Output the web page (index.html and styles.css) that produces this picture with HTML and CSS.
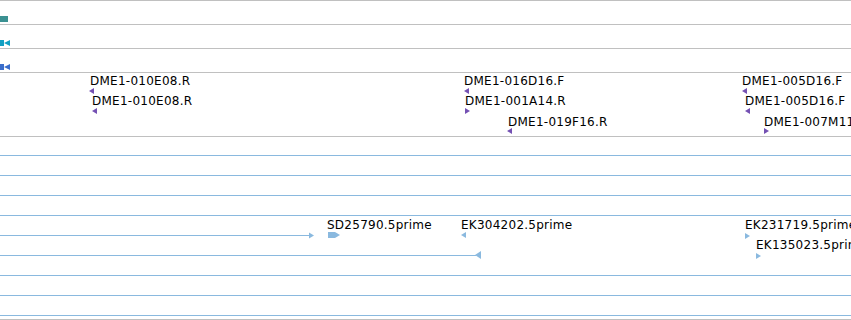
FILE: index.html
```html
<!DOCTYPE html>
<html lang="en">
<head>
    <meta charset="UTF-8">
    <title>Tracks</title>
    <link rel="stylesheet" href="styles.css">
</head>
<body>
    <div class="tracks">
        <!-- track 1 -->
        <div class="track small">
            <div class="feat box teal" style="left:0;top:15px;width:8px;"></div>
        </div>
        <!-- track 2 -->
        <div class="track small">
            <svg class="feat" style="left:0;top:15px" width="10" height="6"><rect x="0" y="0" width="4" height="6" fill="#12a0c3"/><polygon points="4,3 10,0 10,6" fill="#12a0c3"/></svg>
        </div>
        <!-- track 3 -->
        <div class="track small">
            <svg class="feat" style="left:0;top:15px" width="10" height="6"><rect x="0" y="0" width="4" height="6" fill="#3a6dcb"/><polygon points="4,3 10,0 10,6" fill="#3a6dcb"/></svg>
        </div>
        <!-- track 4: end reads -->
        <div class="track reads">
            <span class="label" style="left:90px;top:1px">DME1-010E08.R</span>
            <svg class="feat" style="left:89px;top:15px" width="5" height="6"><polygon points="0,3 5,0 5,6" class="purple"/></svg>
            <span class="label" style="left:92px;top:21px">DME1-010E08.R</span>
            <svg class="feat" style="left:92px;top:35px" width="5" height="6"><polygon points="0,3 5,0 5,6" class="purple"/></svg>

            <span class="label" style="left:464px;top:1px">DME1-016D16.F</span>
            <svg class="feat" style="left:464px;top:15px" width="5" height="6"><polygon points="0,3 5,0 5,6" class="purple"/></svg>
            <span class="label" style="left:465px;top:21px">DME1-001A14.R</span>
            <svg class="feat" style="left:465px;top:35px" width="5" height="6"><polygon points="5,3 0,0 0,6" class="purple"/></svg>
            <span class="label" style="left:508px;top:42px">DME1-019F16.R</span>
            <svg class="feat" style="left:507px;top:55px" width="5" height="6"><polygon points="0,3 5,0 5,6" class="purple"/></svg>

            <span class="label" style="left:742px;top:1px">DME1-005D16.F</span>
            <svg class="feat" style="left:742px;top:15px" width="5" height="6"><polygon points="0,3 5,0 5,6" class="purple"/></svg>
            <span class="label" style="left:745px;top:21px">DME1-005D16.F</span>
            <svg class="feat" style="left:745px;top:35px" width="5" height="6"><polygon points="0,3 5,0 5,6" class="purple"/></svg>
            <span class="label" style="left:764px;top:42px">DME1-007M11.F</span>
            <svg class="feat" style="left:764px;top:55px" width="5" height="6"><polygon points="5,3 0,0 0,6" class="purple"/></svg>
        </div>
        <!-- track 5: ESTs -->
        <div class="track ests">
            <div class="feat line" style="left:0;top:18px;width:100%"></div>
            <div class="feat line" style="left:0;top:38px;width:100%"></div>
            <div class="feat line" style="left:0;top:58px;width:100%"></div>
            <div class="feat line" style="left:0;top:78px;width:100%"></div>

            <div class="feat line" style="left:0;top:98px;width:309px"></div>
            <svg class="feat" style="left:309px;top:95px" width="5" height="7"><polygon points="5,3.5 0,0.5 0,6.5" class="lblue"/></svg>

            <span class="label" style="left:327px;top:81px">SD25790.5prime</span>
            <svg class="feat" style="left:328px;top:95px" width="12" height="6"><polygon points="0,0 7,0 12,3 7,6 0,6" class="lblue"/></svg>

            <span class="label" style="left:461px;top:81px">EK304202.5prime</span>
            <svg class="feat" style="left:461px;top:95px" width="5" height="6"><polygon points="0,3 5,0 5,6" class="lblue"/></svg>

            <div class="feat line" style="left:0;top:118px;width:476px"></div>
            <svg class="feat" style="left:475px;top:114px" width="6" height="8"><polygon points="0,4 6,0 6,8" class="lblue"/></svg>

            <span class="label" style="left:745px;top:81px">EK231719.5prime</span>
            <svg class="feat" style="left:745px;top:96px" width="5" height="6"><polygon points="5,3 0,0 0,6" class="lblue"/></svg>
            <span class="label" style="left:756px;top:101px">EK135023.5prime</span>
            <svg class="feat" style="left:756px;top:116px" width="5" height="6"><polygon points="5,3 0,0 0,6" class="lblue"/></svg>

            <div class="feat line" style="left:0;top:138px;width:100%"></div>
            <div class="feat line" style="left:0;top:158px;width:100%"></div>
            <div class="feat line" style="left:0;top:178px;width:100%"></div>
        </div>
    </div>
</body>
</html>
```

FILE: styles.css
```css
body {
    margin: 0;
    padding: 0;
    background: #fff;
    font-family: 'DejaVu Sans', sans-serif;
    font-size: 12px;
    color: #000;
    overflow: hidden;
}
.tracks {
    width: 851px;
    height: 320px;
    overflow: hidden;
}
.track {
    position: relative;
    border-top: 1px solid #c0c0c0;
    overflow: hidden;
}
.track.small {
    height: 23px;
}
.track.reads {
    height: 63px;
}
.track.ests {
    height: 182px;
    border-bottom: 1px solid #c0c0c0;
}
.feat {
    position: absolute;
    display: block;
}
.box {
    height: 6px;
}
.teal {
    background: #3b9192;
}
.line {
    height: 1px;
    background: #8ab9df;
}
.label {
    position: absolute;
    white-space: nowrap;
    line-height: 14px;
    letter-spacing: 0.25px;
}
.purple {
    fill: #7451b3;
}
.lblue {
    fill: #8ab9df;
}
```
